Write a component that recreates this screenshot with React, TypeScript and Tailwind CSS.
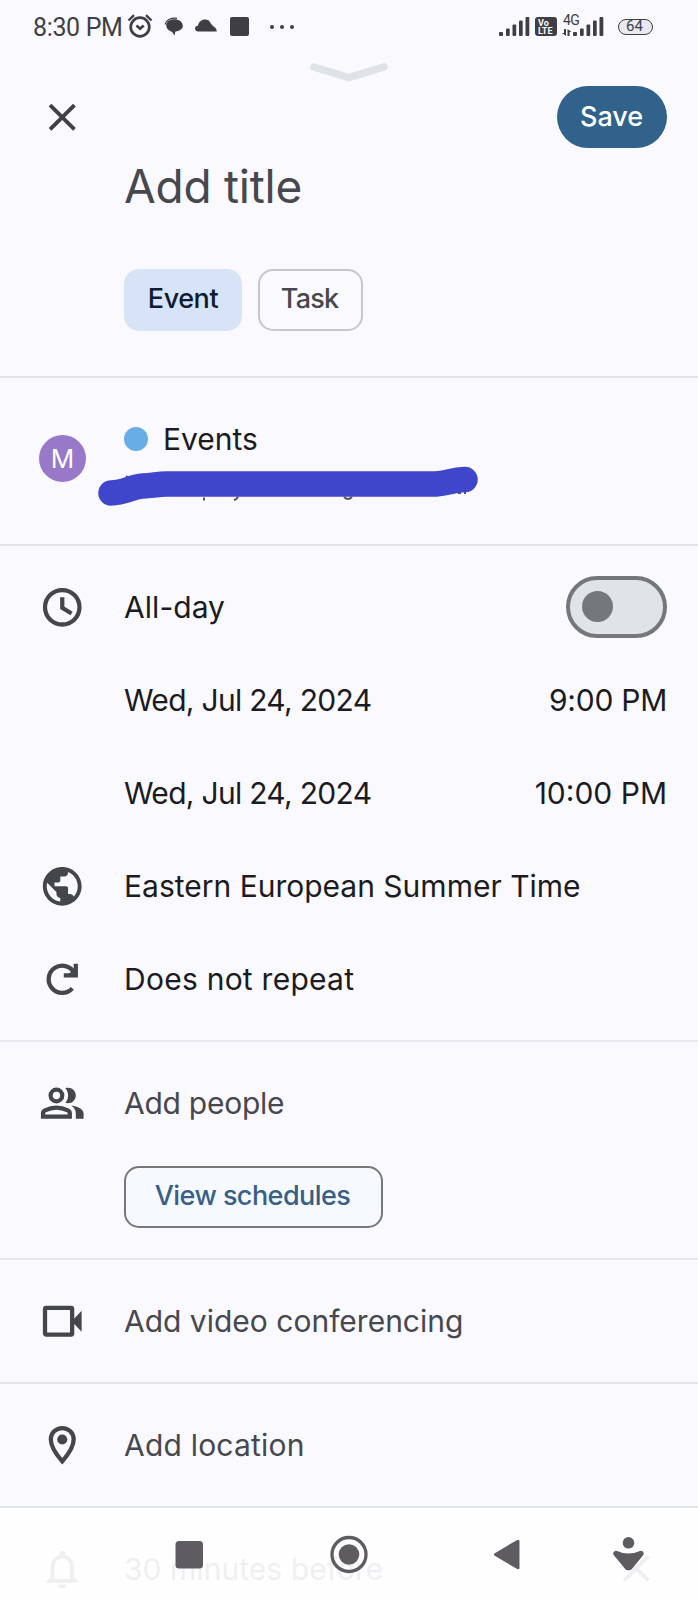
import type { ReactNode } from "react"
import { MdClose, MdNotificationsNone, MdPublic } from "react-icons/md"

function ClockIcon() {
  return (
    <svg viewBox="0 0 24 24" className="size-[46.5px]" fill="none" stroke="currentColor">
      <circle cx="12" cy="12" r="8.9" strokeWidth="2.2" />
      <path d="M12 6.8v5.5l4.8 2.9" strokeWidth="2.2" />
    </svg>
  )
}

function RepeatIcon() {
  return (
    <svg viewBox="0 0 24 24" className="size-[46.5px]" fill="none" stroke="currentColor" strokeWidth="2.2">
      <path d="M17.2 16.7A7 7 0 1 1 18.2 8.8" />
      <path d="M19 4v6h-6.200" />
      <path d="M15 9.5 19 6v3.5z" fill="currentColor" stroke="none" />
    </svg>
  )
}

function PeopleIcon() {
  return (
    <svg viewBox="0 0 24 24" className="size-[46.5px]" fill="none" stroke="currentColor" strokeWidth="2.2">
      <circle cx="9" cy="8" r="3" />
      <path d="M2.100 18.900v-1.700c0-.7.4-1.200 1-1.500 1.600-.8 3.600-1.500 5.900-1.500s4.300.7 5.900 1.500c.6.3 1 .8 1 1.500v1.700z" />
      <path
        d="M13.600 11.800c.9-1 1.400-2.300 1.400-3.800s-.5-2.800-1.400-3.800c.4-.1.900-.2 1.400-.2 2.200 0 4 1.800 4 4s-1.800 4-4 4c-.5 0-1-.1-1.400-.2zM16.700 13.100c3.300.5 6.300 1.900 6.300 4.100V20h-4v-2.800c0-1.700-.9-3-2.300-4.100z"
        fill="currentColor"
        stroke="none"
      />
    </svg>
  )
}

function VideoIcon() {
  return (
    <svg viewBox="0 0 24 24" className="size-[46.5px]">
      <rect x="3.1" y="5.1" width="14" height="13.8" rx="0.6" fill="none" stroke="currentColor" strokeWidth="2.2" />
      <path d="M17.600 11.200 22 6.600v10.800l-4.400-4.600z" fill="currentColor" />
    </svg>
  )
}

function PlaceIcon() {
  return (
    <svg viewBox="0 0 24 24" className="size-[46.5px]">
      <path
        d="M12 3.100C8.700 3.100 6.100 5.700 6.100 9c0 3.800 3.400 8.400 5.900 11.300 2.500-2.900 5.900-7.500 5.900-11.300 0-3.300-2.600-5.900-5.900-5.900z"
        fill="none"
        stroke="currentColor"
        strokeWidth="2.2"
      />
      <circle cx="12" cy="9" r="2.600" fill="currentColor" />
    </svg>
  )
}

function SignalBars() {
  return (
    <svg width="31" height="21" viewBox="0 0 31 21" fill="currentColor">
      <rect x="0" y="16" width="4" height="4" rx="1" />
      <rect x="7" y="12.5" width="3.7" height="7.5" rx="1" />
      <rect x="13.5" y="8.5" width="3.7" height="11.5" rx="1" />
      <rect x="20" y="4.5" width="3.7" height="15.5" rx="1" />
      <rect x="26.5" y="1" width="3.8" height="19" rx="1" />
    </svg>
  )
}

function StatusBar() {
  return (
    <div className="flex h-[53px] items-center pl-8 text-[#3f3e44]">
      <span className="w-[95px] pt-0.5 pl-px font-['Roboto',sans-serif] text-[25px] leading-none tracking-[-0.35px] whitespace-nowrap">
        8:30 PM
      </span>
      <svg width="26" height="25" viewBox="0 0 26 25" className="mb-0.5" fill="none" stroke="currentColor">
        <circle cx="13" cy="14" r="9.3" strokeWidth="2.7" />
        <path d="m9.5 12.5 3.6 3.2 3.6-3.2" strokeWidth="2.6" />
        <path d="M1.5 7.5 7 2.2M24.5 7.5 19 2.2" strokeWidth="2.4" />
      </svg>
      <svg width="20" height="19" viewBox="0 0 20 19" className="ml-[11px]" fill="currentColor">
        <path d="M10 2.200c5 0 8.800 2.700 8.800 6.600 0 3.200-2.600 5.200-7.400 5.700L10.500 18.500 8.200 15C4.200 13.500 2.200 11.300 2.200 8.400c0-3.700 3.300-6.200 7.800-6.200z" />
        <path d="M1 7.500C1.800 3.200 6.500.6 13 1.300" fill="none" stroke="currentColor" strokeWidth="1.2" />
      </svg>
      <svg width="22" height="13" viewBox="0 0 22 13" className="mb-0.5 ml-[11px]" fill="currentColor">
        <path d="M3 12.500C1 12.300 0 11 0 9.500 0 8 1.200 6.700 3.100 6.400 3.500 3 6.500.4 10 .4c3 0 4.900 1.500 6 4.300 1.300 1.700 2.300 2.500 3.400 3.300 1.600 1.200 2.400 2.600 2.300 4.500z" />
      </svg>
      <span className="ml-[13px] size-[19px] rounded-[2px] bg-current" />
      <span className="ml-[21px] flex gap-1.5">
        <span className="size-1 rounded-full bg-current" />
        <span className="size-1 rounded-full bg-current" />
        <span className="size-1 rounded-full bg-current" />
      </span>

      <div className="mr-[45px] ml-auto flex items-center font-['Roboto',sans-serif]">
        <SignalBars />
        <span className="ml-[5px] flex h-[19px] w-[22px] flex-col justify-center rounded-[3px] bg-current text-[9px] leading-[8px] font-bold">
          <span className="pl-[3px] text-[#f9f9ff]">Vo</span>
          <span className="pl-[3px] text-[#f9f9ff]">LTE</span>
        </span>
        <span className="relative ml-[16px]">
          <SignalBars />
          <span className="absolute -top-[3px] -left-[10px] text-[14px] leading-[14px] tracking-[-0.6px]">4G</span>
          <svg width="10" height="7" viewBox="0 0 10 7" className="absolute top-[13px] -left-[11px]" fill="currentColor">
            <path d="M2 0h2v7L0 4h2zM5.500 7V0L9.500 3h-2v4z" />
          </svg>
        </span>
        <span className="ml-[14px] flex h-4 w-[35px] items-center justify-center rounded-full border-[1.5px] border-current bg-[#e9e9ef] pr-0.5 text-[15px] leading-none">
          64
        </span>
      </div>
    </div>
  )
}

function Row({ icon, label, end, muted }: { icon?: ReactNode; label: ReactNode; end?: ReactNode; muted?: boolean }) {
  return (
    <div className={muted ? "flex h-[93px] items-center pr-[31px] pb-0.5 text-[#47474e]" : "flex h-[93px] items-center pr-[31px]"}>
      <div className="flex w-[124px] shrink-0 justify-center pt-px text-[#44464c]">{icon}</div>
      <div className="flex-1">{label}</div>
      {end}
    </div>
  )
}

export default function App() {
  return (
    <div className="relative h-[1600px] w-[698px] overflow-hidden bg-[#f9f9ff] font-['Inter',sans-serif] text-[30px] leading-none whitespace-nowrap text-[#1b1b21]">
      <StatusBar />

      {/* Drag handle */}
      <div className="flex h-[33px] justify-center pt-[9px]">
        <svg width="78" height="22" viewBox="0 0 78 22" fill="none" stroke="#dfe2e7" strokeWidth="7.5" strokeLinecap="round">
          <path d="M4 5 39 15.500 74 5" />
        </svg>
      </div>

      {/* Header */}
      <div className="flex h-[62px] items-center justify-between pr-[31px] pl-[39px]">
        <MdClose className="size-[46.5px] text-[#3f4045]" />
        <button className="h-[62px] w-[110px] rounded-full bg-[#30628c] pr-px pb-px text-[27px] font-medium tracking-[-0.1px] text-white">
          Save
        </button>
      </div>
      <div className="flex h-[121px] items-start pt-[15px] pl-[124px] text-[46px] tracking-[-0.25px] text-[#47474e]">
        Add title
      </div>
      <div className="flex h-[109px] gap-4 border-b-2 border-[#e2e2e8] pl-[124px] text-[27px] font-medium">
        <button className="h-[62px] w-[118px] rounded-[15px] bg-[#d7e4f8] pb-[3px] tracking-[-0.45px] text-[#0d1c33]">
          Event
        </button>
        <button className="h-[62px] w-[105px] rounded-[15px] border-2 border-[#c7c6cc] pr-0.5 pb-[3px] tracking-[-0.8px] text-[#47474e]">
          Task
        </button>
      </div>

      {/* Account */}
      <div className="flex h-[168px] border-b-2 border-[#e2e2e8]">
        <div className="w-[124px] pt-[57px] pl-[39px]">
          <div className="flex size-[47px] items-center justify-center rounded-full bg-[#9878c8] text-[26px] text-white">M</div>
        </div>
        <div className="relative flex-1 pt-[46px]">
          <div className="flex items-center">
            <span className="size-[24px] rounded-full bg-[#68ade6]" />
            <span className="pl-[15px]">Events</span>
          </div>
          <svg width="384" height="46" viewBox="0 0 384 46" className="absolute top-[86px] -left-[28px]" fill="none">
            <path
              d="M108 33.500v3M142 32.500q-1 3-4 3.500M248 33q4 4 8 0M362 29h3M369 28v2M30 12l2 2"
              stroke="#55555c"
              strokeWidth="2"
            />
            <path
              d="M15 29C28 29 38 22 47 22C56 22 62 20 70 20H340C352 19 356 16 369 15.500"
              stroke="#3f46cc"
              strokeWidth="25.5"
              strokeLinecap="round"
              strokeLinejoin="round"
            />
          </svg>
        </div>
      </div>

      {/* Date and time */}
      <div className="border-b-2 border-[#e8e8ee] pt-[14px] pb-[15px]">
        <Row
          icon={<ClockIcon />}
          label={<span className="tracking-[0.05px]">All-day</span>}
          end={
            <div className="flex h-[62px] w-[101px] items-center rounded-full border-4 border-[#74777c] bg-[#e0e3e7] pl-[11.5px]">
              <span className="size-[31px] rounded-full bg-[#74777c]" />
            </div>
          }
        />
        <Row
          label={<span className="tracking-[-0.7px]">Wed, Jul 24, 2024</span>}
          end={<span className="tracking-[-0.25px]">9:00 PM</span>}
        />
        <Row label={<span className="tracking-[-0.7px]">Wed, Jul 24, 2024</span>} end="10:00 PM" />
        <Row icon={<MdPublic className="size-[46.5px]" />} label="Eastern European Summer Time" />
        <Row icon={<RepeatIcon />} label={<span className="tracking-[0.25px]">Does not repeat</span>} />
      </div>

      {/* People */}
      <div className="h-[218px] border-b-2 border-[#e6e6ec] pt-[15px]">
        <Row muted icon={<PeopleIcon />} label={<span className="tracking-[-0.25px]">Add people</span>} />
        <button className="mt-4 ml-[124px] h-[62px] w-[259px] rounded-[15px] border-2 border-[#77777e] bg-[#f6faff] pr-0.5 pb-[3px] text-[27px] font-medium tracking-[-0.55px] text-[#375f87]">
          View schedules
        </button>
      </div>

      <div className="h-[124px] border-b-2 border-[#e4e5eb] pt-[15px]">
        <Row muted icon={<VideoIcon />} label="Add video conferencing" />
      </div>
      <div className="h-[124px] border-b-2 border-[#dfe5e8] pt-[15px]">
        <Row muted icon={<PlaceIcon />} label={<span className="tracking-[0.2px]">Add location</span>} />
      </div>

      {/* Reminder, scrolled under the navigation bar */}
      <div className="pt-[15px]">
        <Row
          muted
          icon={<MdNotificationsNone className="size-[46.5px]" />}
          label={<span className="tracking-[0.05px]">30 minutes before</span>}
          end={<MdClose className="mr-[8px] size-[46.5px] text-[#47474e]" />}
        />
      </div>

      {/* System navigation */}
      <div className="absolute inset-x-0 bottom-0 h-[92px] bg-[#fefeff]/92 text-[#5e5c60]">
        <svg width="698" height="92" viewBox="0 0 698 92" fill="currentColor">
          <rect x="175.5" y="33" width="27.5" height="27.5" rx="3.5" />
          <circle cx="349" cy="46.5" r="17" fill="none" stroke="currentColor" strokeWidth="3.3" />
          <circle cx="349" cy="46.5" r="10.3" />
          <path d="M495.500 46.500 518 33.200v26.600z" stroke="currentColor" strokeWidth="3" strokeLinejoin="round" />
          <circle cx="628.5" cy="34.8" r="5.8" />
          <path
            d="M616 45.500Q628.500 51 641 45.500L629.500 59.500h-2z"
            stroke="currentColor"
            strokeWidth="5.5"
            strokeLinejoin="round"
          />
        </svg>
      </div>
    </div>
  )
}
